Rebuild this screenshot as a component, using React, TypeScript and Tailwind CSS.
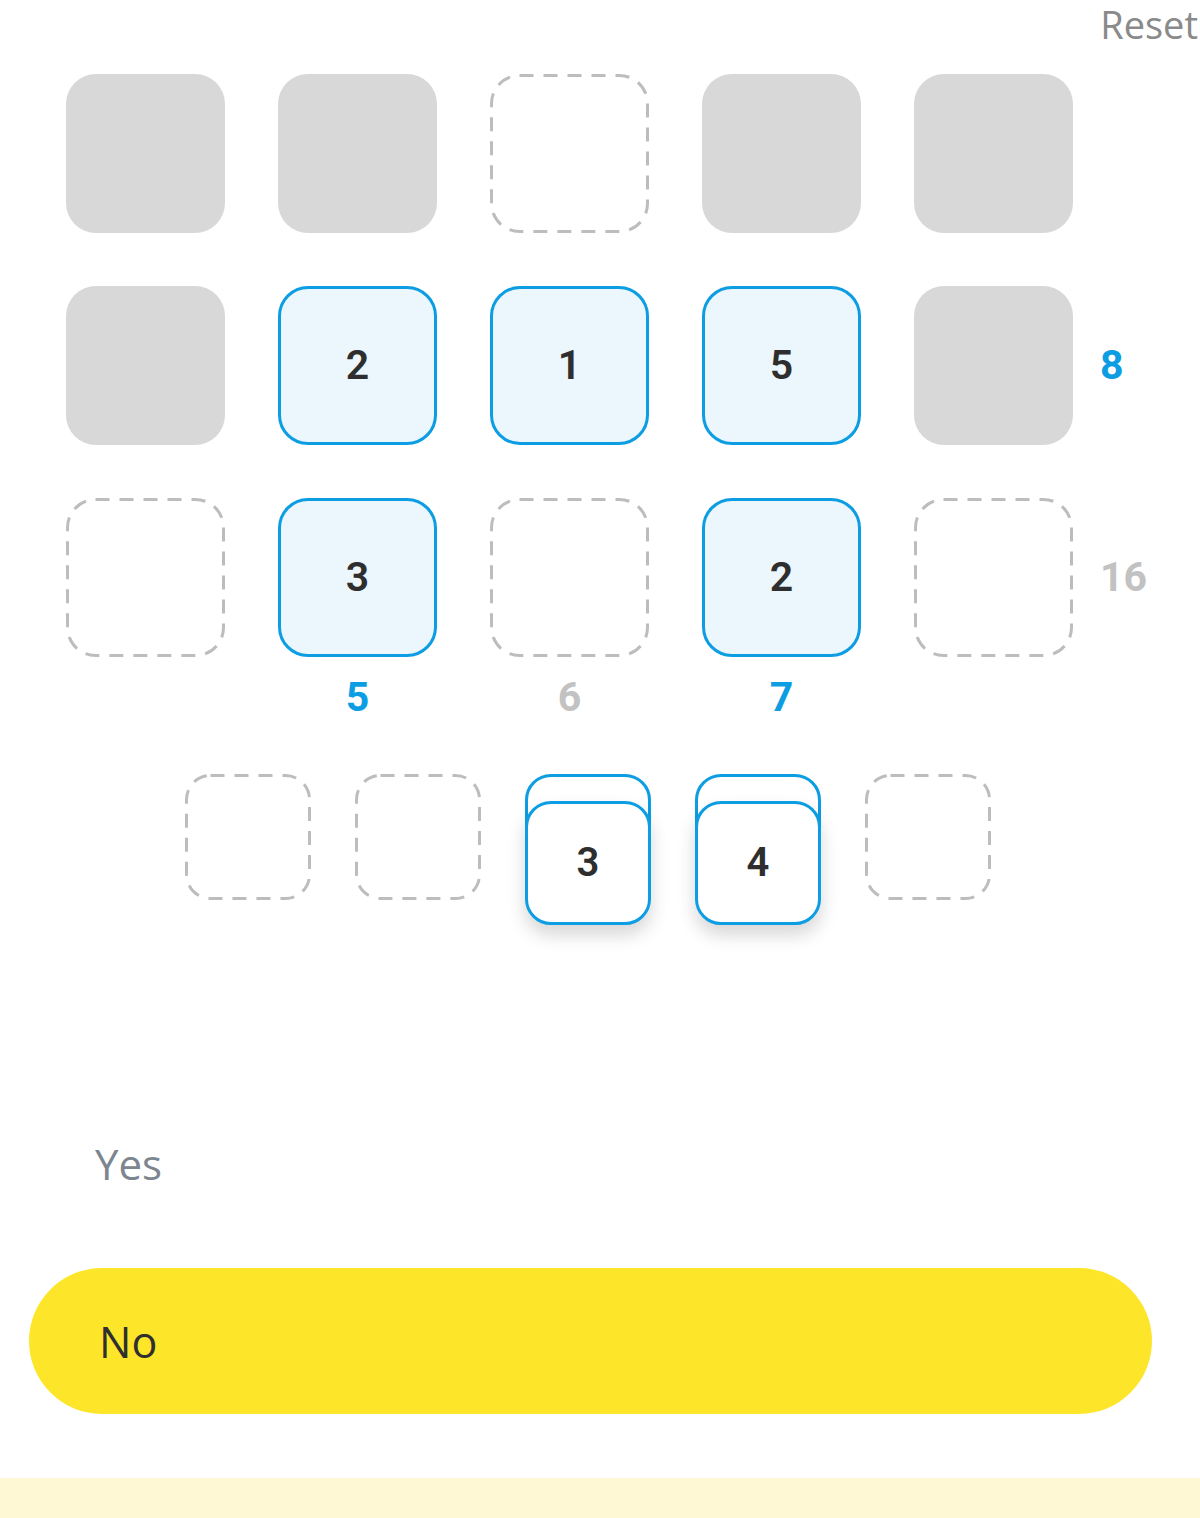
const num = "font-['Roboto',sans-serif]"
const ui = "font-['Open_Sans','Noto_Sans',sans-serif]"

type Cell = "gray" | "empty" | number

const rows: { cells: Cell[]; total?: { value: string; done: boolean } }[] = [
  { cells: ["gray", "gray", "empty", "gray", "gray"] },
  { cells: ["gray", 2, 1, 5, "gray"], total: { value: "8", done: true } },
  { cells: ["empty", 3, "empty", 2, "empty"], total: { value: "16", done: false } },
]

const columnTotals: { value: string; done: boolean }[] = [
  { value: "", done: false },
  { value: "5", done: true },
  { value: "6", done: false },
  { value: "7", done: true },
  { value: "", done: false },
]

// dashed outline drawn as svg so the dash length matches the long dashes
function Dashed({ size, radius }: { size: number; radius: number }) {
  return (
    <svg width={size} height={size} className="block">
      <rect
        x={1.5}
        y={1.5}
        width={size - 3}
        height={size - 3}
        rx={radius}
        fill="none"
        stroke="#bdbdbd"
        strokeWidth={3}
        strokeDasharray="14 10"
      />
    </svg>
  )
}

function Tile({ cell }: { cell: Cell }) {
  if (cell === "gray") {
    return <div className="w-[159px] h-[159px] rounded-[30px] bg-[#d8d8d8]" />
  }
  if (cell === "empty") {
    return (
      <div className="w-[159px] h-[159px]">
        <Dashed size={159} radius={28} />
      </div>
    )
  }
  return (
    <div
      className={`w-[159px] h-[159px] rounded-[30px] border-[3px] border-[#0c9de2] bg-[#ebf6fd] flex items-center justify-center text-[41px] leading-none font-semibold text-[#2e2e2e] ${num}`}
    >
      {cell}
    </div>
  )
}

function StackTile({ value }: { value: number }) {
  return (
    <div className="relative w-[126px] h-[151px]">
      <div className="absolute left-0 top-0 w-[126px] h-[124px] rounded-[26px] border-[3px] border-[#0c9de2] bg-white" />
      <div
        className={`absolute left-0 top-[27px] w-[126px] h-[124px] rounded-[26px] border-[3px] border-[#0c9de2] bg-white shadow-[0_10px_18px_rgba(0,0,0,0.16)] flex items-center justify-center text-[40px] leading-none font-semibold text-[#2e2e2e] ${num}`}
      >
        {value}
      </div>
    </div>
  )
}

function EmptySlot() {
  return (
    <div className="w-[126px] h-[126px]">
      <Dashed size={126} radius={24} />
    </div>
  )
}

export default function App() {
  return (
    <div className="w-[1200px] h-[1518px] bg-white flex flex-col overflow-hidden">
      <div className="h-[74px] flex justify-end items-start pt-[5px] pr-[2px]">
        <span className={`text-[38px] leading-none text-[#8a8a8a] ${ui}`}>Reset</span>
      </div>

      <div className="pl-[66px] flex flex-col gap-[53px]">
        {rows.map((row, i) => (
          <div key={i} className="flex items-center">
            <div className="flex gap-[53px]">
              {row.cells.map((c, j) => (
                <Tile key={j} cell={c} />
              ))}
            </div>
            {row.total && (
              <span
                className={`ml-[27px] text-[41px] leading-none font-bold ${num} ${
                  row.total.done ? "text-[#0c9de2]" : "text-[#c2c2c2]"
                }`}
              >
                {row.total.value}
              </span>
            )}
          </div>
        ))}
      </div>

      <div className="pl-[66px] mt-[20px] flex gap-[53px]">
        {columnTotals.map((t, i) => (
          <div
            key={i}
            className={`w-[159px] h-[42px] text-center text-[41px] leading-none font-bold ${num} ${
              t.done ? "text-[#0c9de2]" : "text-[#c2c2c2]"
            }`}
          >
            {t.value}
          </div>
        ))}
      </div>

      <div className="mt-[55px] pl-[185px] flex gap-[44px] items-start">
        <EmptySlot />
        <EmptySlot />
        <StackTile value={3} />
        <StackTile value={4} />
        <EmptySlot />
      </div>

      <div className={`mt-[218px] pl-[95px] text-[42px] leading-none text-[#7d8591] ${ui}`}>Yes</div>

      <div className="mt-[83px] ml-[29px] w-[1123px] h-[146px] rounded-full bg-[#fde629] flex items-center pl-[70px]">
        <span className={`text-[43px] leading-none text-[#2f2f2f] ${ui}`}>No</span>
      </div>

      <div className="mt-auto h-[40px] bg-[#fff8d4]" />
    </div>
  )
}
